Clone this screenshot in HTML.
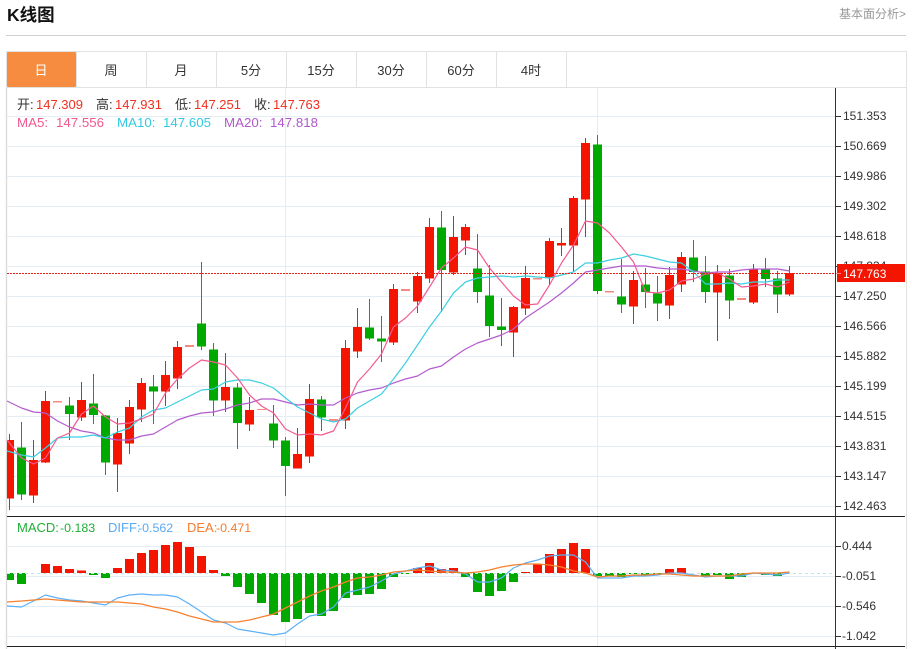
<!DOCTYPE html>
<html><head><meta charset="utf-8"><title>K线图</title>
<style>
html,body{margin:0;padding:0;background:#fff;width:912px;height:649px;overflow:hidden}
svg{display:block}
text{font-family:"Liberation Sans","Noto Sans CJK SC",sans-serif}
</style></head>
<body>
<svg width="912" height="649" viewBox="0 0 912 649" xmlns="http://www.w3.org/2000/svg">
<rect width="912" height="649" fill="#fff"/>
<text x="7" y="21" font-size="17.500" font-weight="700" fill="#111">K线图</text>
<text x="839" y="18" font-size="12" fill="#999">基本面分析&gt;</text>
<path d="M6 35.500H906" stroke="#d0d0d0" fill="none"/>
<!-- tabs -->
<path d="M6.500 649V51.500H906.500V649" stroke="#e2e2e2" fill="none"/>
<path d="M6.500 88V649" stroke="#dcdcdc" stroke-width="1.400" fill="none"/>
<path d="M7 87.500H906" stroke="#e2e2e2" fill="none"/>
<path d="M76.500 52V87M146.500 52V87M216.500 52V87M286.500 52V87M356.500 52V87M426.500 52V87M496.500 52V87M566.500 52V87" stroke="#e2e2e2" fill="none"/>
<rect x="7" y="52" width="69" height="35" rx="1" fill="#f58c40"/>
<g font-size="13" fill="#333" text-anchor="middle">
<text x="41" y="75" fill="#fff">日</text>
<text x="111" y="75">周</text>
<text x="181" y="75">月</text>
<text x="251" y="75">5分</text>
<text x="321" y="75">15分</text>
<text x="391" y="75">30分</text>
<text x="461" y="75">60分</text>
<text x="531" y="75">4时</text>
</g>
<!-- grid -->
<path d="M7 116.500H835M7 146.500H835M7 176.500H835M7 206.500H835M7 236.500H835M7 266.500H835M7 296.500H835M7 326.500H835M7 356.500H835M7 386.500H835M7 416.500H835M7 446.500H835M7 476.500H835M7 506.500H835M7 546.500H835M7 576.500H835M7 606.500H835M7 636.500H835M285.500 88V646M597.500 88V646" stroke="#e3edf3" fill="none"/>
<!-- candles red -->
<g fill="#f31500">
<path fill="none" stroke="#f01c0c" d="M9.500 434V510M33.500 440V503M45.500 391V463M81.500 382V421M117.500 418V492M129.500 400V454M141.500 378V422M165.500 361V406M177.500 341V389M225.500 353V412M249.500 397V431M297.500 428V468M309.500 384V463M345.500 340V429M357.500 308V358M393.500 284V345M417.500 272V313M429.500 218V283M453.500 216V275M465.500 224V255M513.500 306V357M525.500 266V315M549.500 238V285M561.500 228V256M573.500 196V272M585.500 138V237M633.500 271V324M669.500 267V319M681.500 252V292M717.500 265V341M753.500 264V304M789.500 266V296"/>
<path d="M7 440h7V498.500h-7zM29 460h9V495.500h-9zM41 401h9V462.500h-9zM77 400h9V417.500h-9zM113 433h9V464.500h-9zM125 407h9V443.500h-9zM137 383h9V409.500h-9zM161 375h9V391.500h-9zM173 347h9V378.500h-9zM221 387h9V400.500h-9zM245 410h9V424.500h-9zM293 454h9V468.500h-9zM305 399h9V456.500h-9zM341 348h9V420.500h-9zM353 327h9V351.500h-9zM389 289h9V342.500h-9zM413 276h9V301.500h-9zM425 227h9V278.500h-9zM449 237h9V272.500h-9zM461 227h9V240.500h-9zM509 307h9V332.500h-9zM521 278h9V308.500h-9zM545 241h9V277.500h-9zM557 243h9V245.500h-9zM569 198h9V245.500h-9zM581 143h9V199.500h-9zM629 280h9V306.500h-9zM665 275h9V305.500h-9zM677 257h9V284.500h-9zM713 273h9V292.500h-9zM749 269h9V302.500h-9zM785 273h9V294.500h-9z"/>
<path fill="#f78a80" d="M53 401h9v1.500h-9zM185 345h9v2h-9zM257 409h9v1h-9zM329 419h9v2h-9zM401 289h9v2h-9zM533 278h9v1.500h-9zM605 291h9v1.500h-9zM737 298h9v2h-9z"/>
</g>
<!-- candles green -->
<g fill="#00a900">
<path fill="none" stroke="#0aa50a" d="M21.500 422V500M69.500 397V440M93.500 374V424M105.500 415V475M153.500 375V424M201.500 262V350M213.500 343V416M237.500 383V449M273.500 405V448M285.500 437V496M321.500 396V431M369.500 299V340M381.500 316V362M441.500 211V312M477.500 234V303M489.500 265V337M501.500 298V346M597.500 135V294M621.500 259V313M645.500 268V308M657.500 276V321M693.500 240V282M705.500 256V303M729.500 269V319M765.500 258V287M777.500 271V313"/>
<path d="M17 447.500h9V494.500h-9zM65 405.500h9V414h-9zM89 403.500h9V415h-9zM101 415.500h9V462.500h-9zM149 386.500h9V391.500h-9zM197 323.500h9V346.500h-9zM209 349.500h9V400.500h-9zM233 387.500h9V423h-9zM269 423.500h9V440.500h-9zM281 440.500h9V466h-9zM317 399.500h9V417.500h-9zM365 327.500h9V338.500h-9zM377 338.500h9V341.500h-9zM437 227.500h9V270h-9zM473 268.500h9V292h-9zM485 295.500h9V326h-9zM497 326.500h9V330h-9zM593 144.500h9V291h-9zM617 296.500h9V304.500h-9zM641 284.500h9V292h-9zM653 293.500h9V303.500h-9zM689 257.500h9V272h-9zM701 271.500h9V292h-9zM725 275.500h9V300.500h-9zM761 269.500h9V279h-9zM773 278.500h9V294.500h-9z"/>
</g>
<!-- MA lines -->
<g fill="none" stroke-width="1.200" stroke-linejoin="round">
<polyline stroke="#b45ccf" points="7,401 21.500,408 33.500,412 45.500,413 57.500,421 69.500,427 81.500,431 93.500,433 105.500,438 117.500,440 129.500,440 141.500,436 153.500,434 165.500,427 177.500,420 189.500,416 201.500,413 213.500,412 225.500,409 237.500,405 249.500,403 261.500,399 273.500,399 285.500,402 297.500,405 309.500,404 321.500,405 333.500,405 345.500,398 357.500,393 369.500,390 381.500,388 393.500,383 405.500,379 417.500,376 429.500,369 441.500,366 453.500,357 465.500,349 477.500,343 489.500,339 501.500,335 513.500,329 525.500,318 537.500,310 549.500,302 561.500,293 573.500,283 585.500,272 597.500,270 609.500,268 621.500,266 633.500,266 645.500,266 657.500,268 669.500,269 681.500,269 693.500,271 705.500,273 717.500,272 729.500,272 741.500,270 753.500,269 765.500,269 777.500,269 789.500,271"/>
<polyline stroke="#3ccfe2" points="7,451 21.500,455 33.500,457 45.500,448 57.500,438 69.500,437 81.500,437 93.500,435 105.500,438 117.500,432 129.500,428 141.500,417 153.500,410 165.500,408 177.500,402 189.500,396 201.500,390 213.500,389 225.500,382 237.500,380 249.500,380 261.500,383 273.500,388 285.500,398 297.500,407 309.500,413 321.500,419 333.500,422 345.500,419 357.500,408 369.500,401 381.500,394 393.500,379 405.500,363 417.500,345 429.500,327 441.500,311 453.500,293 465.500,282 477.500,278 489.500,277 501.500,276 513.500,277 525.500,276 537.500,277 549.500,278 561.500,275 573.500,272 585.500,263 597.500,263 609.500,260 621.500,258 633.500,254 645.500,256 657.500,259 669.500,262 681.500,263 693.500,272 705.500,284 717.500,284 729.500,283 741.500,284 753.500,282 765.500,282 777.500,280 789.500,280"/>
<polyline stroke="#f55a90" points="7,440 21.500,458 33.500,464 45.500,458 57.500,438 69.500,433 81.500,414 93.500,406 105.500,417 117.500,424 129.500,423 141.500,419 153.500,414 165.500,393 177.500,379 189.500,368 201.500,360 213.500,362 225.500,365 237.500,378 249.500,395 261.500,406 273.500,413 285.500,429 297.500,435 309.500,434 321.500,435 333.500,431 345.500,408 357.500,382 369.500,369 381.500,354 393.500,327 405.500,318 417.500,306 429.500,287 441.500,268 453.500,258 465.500,247 477.500,250 489.500,268 501.500,282 513.500,296 525.500,305 537.500,304 549.500,285 561.500,263 573.500,245 585.500,221 597.500,223 609.500,233 621.500,247 633.500,262 645.500,292 657.500,293 669.500,290 681.500,281 693.500,279 705.500,274 717.500,273 729.500,279 741.500,287 753.500,286 765.500,284 777.500,287 789.500,282"/>
</g>
<!-- last price line -->
<path d="M7 273.500H835" stroke="#e8231a" stroke-dasharray="2 1" fill="none"/>
<!-- legend -->
<g font-size="13">
<text x="17" y="109" fill="#333">开:</text><text x="36" y="109" fill="#f03020">147.309</text>
<text x="96" y="109" fill="#333">高:</text><text x="115" y="109" fill="#f03020">147.931</text>
<text x="175" y="109" fill="#333">低:</text><text x="194" y="109" fill="#f03020">147.251</text>
<text x="254" y="109" fill="#333">收:</text><text x="273" y="109" fill="#f03020">147.763</text>
<text x="17" y="127" fill="#f2588f" font-size="13.300">MA5:</text><text x="56" y="127" fill="#f2588f" font-size="13.300">147.556</text>
<text x="117" y="127" fill="#33c9e0" font-size="13.300">MA10:</text><text x="163" y="127" fill="#33c9e0" font-size="13.300">147.605</text>
<text x="224" y="127" fill="#b158cc" font-size="13.300">MA20:</text><text x="270" y="127" fill="#b158cc" font-size="13.300">147.818</text>
<text x="17" y="532" fill="#1fae35">MACD:</text><text x="60" y="532" fill="#1fae35" font-size="12.400">-0.183</text>
<text x="108" y="532" fill="#5aa9f2">DIFF:</text><text x="138" y="532" fill="#5aa9f2" font-size="12.400">-0.562</text>
<text x="187" y="532" fill="#f57c2d">DEA:</text><text x="216" y="532" fill="#f57c2d" font-size="12.400">-0.471</text>
</g>
<!-- MACD bars -->
<g>
<path fill="#f31500" d="M41 564h9v9h-9zM53 566h9v7h-9zM65 569h9v4h-9zM77 570.500h9v2.500h-9zM113 568h9v5h-9zM125 559h9v14h-9zM137 553h9v20h-9zM149 550h9v23h-9zM161 545h9v28h-9zM173 542h9v31h-9zM185 547h9v26h-9zM197 556h9v17h-9zM209 570h9v3h-9zM413 568h9v5h-9zM425 563h9v10h-9zM437 569h9v4h-9zM449 568h9v5h-9zM521 572h9v1h-9zM533 564h9v9h-9zM545 554h9v19h-9zM557 549h9v24h-9zM569 543h9v30h-9zM581 549h9v24h-9zM665 569h9v4h-9zM677 568h9v5h-9z"/>
<path fill="#00a900" d="M7 573h7v7h-7zM17 573h9v11h-9zM89 573h9v2h-9zM101 573h9v5h-9zM221 573h9v3h-9zM233 573h9v14h-9zM245 573h9v21h-9zM257 573h9v30h-9zM269 573h9v42h-9zM281 573h9v49h-9zM293 573h9v46h-9zM305 573h9v40h-9zM317 573h9v43h-9zM329 573h9v38h-9zM341 573h9v25h-9zM353 573h9v22h-9zM365 573h9v21h-9zM377 573h9v16h-9zM389 573h9v4h-9zM401 573h9v1h-9zM461 573h9v4h-9zM473 573h9v19h-9zM485 573h9v23h-9zM497 573h9v18h-9zM509 573h9v9h-9zM593 573h9v3h-9zM605 573h9v3h-9zM617 573h9v4h-9zM629 573h9v1h-9zM641 573h9v2h-9zM653 573h9v1h-9zM701 573h9v3h-9zM713 573h9v2h-9zM725 573h9v6h-9zM737 573h9v4h-9zM761 573h9v2h-9zM773 573h9v3h-9z"/>
</g>
<path d="M7 573.500H835" stroke="#bfe4ee" stroke-dasharray="3 3" fill="none"/>
<polyline fill="none" stroke="#5fb0f5" stroke-width="1.200" stroke-linejoin="round" points="7,606 21.500,607 33.500,601 45.500,595 57.500,598 69.500,600 81.500,601 93.500,603 105.500,605 117.500,598 129.500,595 141.500,594 153.500,595 165.500,595 177.500,597 189.500,604 201.500,612 213.500,620 225.500,623 237.500,629 249.500,631 261.500,633 273.500,635 285.500,633 297.500,624 309.500,616 321.500,614 333.500,607 345.500,593 357.500,590 369.500,587 381.500,581 393.500,574 405.500,571 417.500,568 429.500,566 441.500,570 453.500,571 465.500,574 477.500,582 489.500,582 501.500,578 513.500,568 525.500,563 537.500,560 549.500,556 561.500,555 573.500,555 585.500,562 597.500,578 609.500,578 621.500,578 633.500,576 645.500,576 657.500,575 669.500,573 681.500,573 693.500,575 705.500,577 717.500,576 729.500,576 741.500,576 753.500,573 765.500,574 777.500,575 789.500,573"/>
<polyline fill="none" stroke="#f7802e" stroke-width="1.300" stroke-linejoin="round" points="7,602 21.500,601 33.500,600 45.500,599 57.500,600 69.500,601 81.500,602 93.500,602 105.500,602 117.500,602 129.500,603 141.500,604 153.500,607 165.500,609 177.500,612 189.500,616 201.500,619 213.500,622 225.500,622 237.500,622 249.500,620 261.500,617 273.500,614 285.500,608 297.500,602 309.500,596 321.500,591 333.500,587 345.500,582 357.500,578 369.500,577 381.500,575 393.500,572 405.500,571 417.500,570 429.500,571 441.500,572 453.500,572 465.500,573 477.500,572 489.500,570 501.500,567 513.500,565 525.500,564 537.500,564 549.500,565 561.500,567 573.500,571 585.500,573 597.500,577 609.500,576 621.500,576 633.500,575 645.500,575 657.500,574 669.500,574 681.500,575 693.500,576 705.500,576 717.500,576 729.500,576 741.500,574 753.500,573 765.500,573 777.500,573 789.500,572"/>
<!-- axes -->
<path d="M7 516.500H905M7 646.500H905" stroke="#222" fill="none"/>
<path d="M835.500 88V649" stroke="#333" fill="none"/>
<path d="M836 116.500h5M836 146.500h5M836 176.500h5M836 206.500h5M836 236.500h5M836 266.500h5M836 296.500h5M836 326.500h5M836 356.500h5M836 386.500h5M836 416.500h5M836 446.500h5M836 476.500h5M836 506.500h5M836 546.500h5M836 576.500h5M836 606.500h5M836 636.500h5" stroke="#333" fill="none"/>
<g font-size="12" fill="#333">
<text x="843" y="120">151.353</text>
<text x="843" y="150">150.669</text>
<text x="843" y="180">149.986</text>
<text x="843" y="210">149.302</text>
<text x="843" y="240">148.618</text>
<text x="843" y="270">147.934</text>
<text x="843" y="300">147.250</text>
<text x="843" y="330">146.566</text>
<text x="843" y="360">145.882</text>
<text x="843" y="390">145.199</text>
<text x="843" y="420">144.515</text>
<text x="843" y="450">143.831</text>
<text x="843" y="480">143.147</text>
<text x="843" y="510">142.463</text>
<text x="842" y="550">0.444</text>
<text x="842" y="580">-0.051</text>
<text x="842" y="610">-0.546</text>
<text x="842" y="640">-1.042</text>
</g>
<rect x="837" y="264" width="68" height="18" fill="#f31500"/>
<path d="M836 273.500h5" stroke="#f88" fill="none"/>
<text x="843" y="278" font-size="12" fill="#fff">147.763</text>
</svg>
</body></html>
